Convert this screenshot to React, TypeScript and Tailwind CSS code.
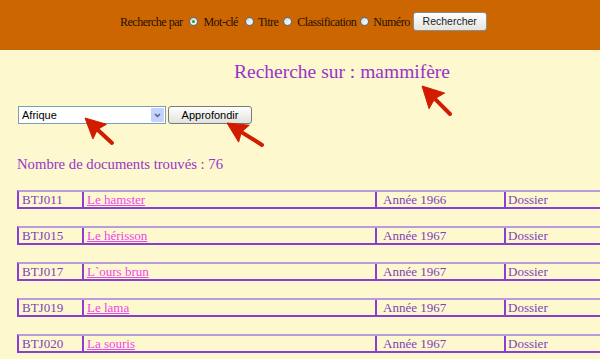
import React from "react";

const rows = [
  { code: "BTJ011", title: "Le hamster", year: "Année 1966" },
  { code: "BTJ015", title: "Le hérisson", year: "Année 1967" },
  { code: "BTJ017", title: "L`ours brun", year: "Année 1967" },
  { code: "BTJ019", title: "Le lama", year: "Année 1967" },
  { code: "BTJ020", title: "La souris", year: "Année 1967" },
];

function Radio({ checked = false }: { checked?: boolean }) {
  return (
    <span className="inline-flex h-[9px] w-[9px] items-center justify-center rounded-full border border-[#4a6f95] bg-gradient-to-br from-[#d8d8d0] to-white">
      {checked && <span className="h-[3px] w-[3px] rounded-full bg-[#21a121]" />}
    </span>
  );
}

function Arrow({ tip, tail, head = 20, half = 10 }: { tip: [number, number]; tail: [number, number]; head?: number; half?: number }) {
  const dx = tail[0] - tip[0];
  const dy = tail[1] - tip[1];
  const len = Math.hypot(dx, dy);
  const ux = dx / len;
  const uy = dy / len;
  const bx = tip[0] + ux * head;
  const by = tip[1] + uy * head;
  const px = -uy * half;
  const py = ux * half;
  return (
    <g fill="#d21c00" stroke="#d21c00">
      <line x1={bx - ux * 2} y1={by - uy * 2} x2={tail[0]} y2={tail[1]} strokeWidth={4} strokeLinecap="round" />
      <polygon points={`${tip[0]},${tip[1]} ${bx + px},${by + py} ${bx + ux * -3},${by + uy * -3} ${bx - px},${by - py}`} strokeWidth={1} strokeLinejoin="round" />
    </g>
  );
}

export default function App() {
  return (
    <div className="relative h-[359px] w-[600px] overflow-hidden bg-[#fdf8cd]" style={{ fontFamily: '"Liberation Serif", serif' }}>
      <header className="flex h-[50px] items-start bg-[#cc6600] pl-[120px] pt-[12px]">
        <div className="flex h-[19px] items-center text-[12px] tracking-[-0.5px] text-[#1e1000]">
          <span>Recherche par</span>
          <span className="ml-[7px] flex"><Radio checked /></span>
          <span className="ml-[5px]">Mot-clé</span>
          <span className="ml-[7px] flex"><Radio /></span>
          <span className="ml-[4px]">Titre</span>
          <span className="ml-[5px] flex"><Radio /></span>
          <span className="ml-[5px]">Classification</span>
          <span className="ml-[4px] flex"><Radio /></span>
          <span className="ml-[4px]">Numéro</span>
        </div>
        <button className="ml-[3px] h-[19px] w-[74px] rounded-[3px] border border-[#8c8c8c] bg-gradient-to-b from-white to-[#e4e4e0] text-[10.5px] text-[#222]" style={{ fontFamily: '"Liberation Sans", sans-serif' }}>
          Rechercher
        </button>
      </header>

      <h1 className="mt-[11px] pl-[234px] text-[19.5px] leading-[22px] text-[#9933cc]">Recherche sur : mammifère</h1>

      <div className="mt-[23px] flex items-center pl-[18px]" style={{ fontFamily: '"Liberation Sans", sans-serif' }}>
        <div className="flex h-[18px] w-[148px] items-center border border-[#7f9db9] bg-white">
          <span className="flex-1 pl-[3px] text-[11px] text-black">Afrique</span>
          <span className="mr-[1px] flex h-[14px] w-[13px] items-center justify-center rounded-[1px] bg-[#c3d3fd]">
            <svg width="7" height="5" viewBox="0 0 7 5">
              <path d="M1 1 L3.5 3.5 L6 1" fill="none" stroke="#4d6185" strokeWidth="1.5" />
            </svg>
          </span>
        </div>
        <button className="ml-[2px] h-[18px] w-[84px] rounded-[3px] border border-[#7a7a7a] bg-gradient-to-b from-white to-[#e2e2de] text-[11px] text-black">
          Approfondir
        </button>
      </div>

      <p className="mt-[32px] pl-[17px] text-[14.7px] leading-[17px] text-[#9933cc]">Nombre de documents trouvés : 76</p>

      <div className="mt-[17px] flex flex-col gap-[17px] pl-[17px]">
        {rows.map((r) => (
          <div key={r.code} className="flex h-[19px] w-[700px] shrink-0 border-t-2 border-b-2 border-l-2 border-t-[#b99ce0] border-b-[#8a3fd2] border-l-[#8a3fd2] text-[13px] leading-[15px] text-[#7f3fc0]">
            <div className="w-[63px] shrink-0 pl-[3px]">{r.code}</div>
            <div className="w-[293px] shrink-0 border-l-2 border-[#8a3fd2] pl-[3px]">
              <a className="text-[#f044f0] underline">{r.title}</a>
            </div>
            <div className="w-[129px] shrink-0 border-l-2 border-[#8a3fd2] pl-[6px]">{r.year}</div>
            <div className="flex-1 border-l-2 border-[#8a3fd2] pl-[2px]">Dossier</div>
          </div>
        ))}
      </div>

      <svg className="pointer-events-none absolute left-0 top-0" width="600" height="359">
        <Arrow tip={[85, 118]} tail={[112, 143]} head={20} half={10} />
        <Arrow tip={[227, 123]} tail={[262, 145]} head={20} half={10} />
        <Arrow tip={[422, 86]} tail={[450, 114]} head={21} half={11} />
      </svg>
    </div>
  );
}
